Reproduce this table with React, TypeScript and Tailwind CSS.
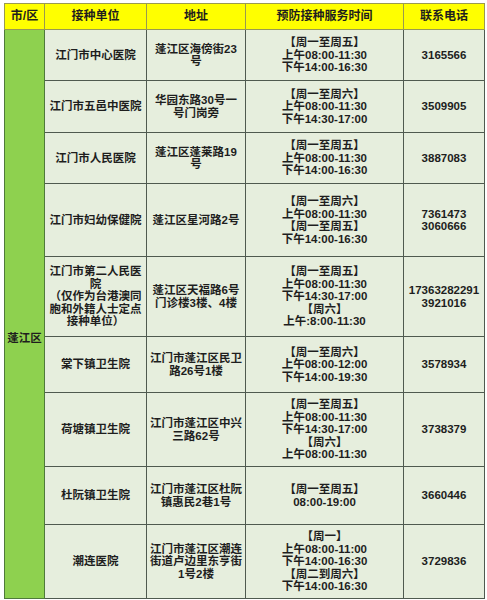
import React from "react";

type Row = {
  unit: string[];
  addr: string[];
  time: string[];
  phone: string[];
  h: string;
};

const rows: Row[] = [
  {
    unit: ["江门市中心医院"],
    addr: ["蓬江区海傍街23", "号"],
    time: ["【周一至周五】", "上午08:00-11:30", "下午14:00-16:30"],
    phone: ["3165566"],
    h: "h-[51px]",
  },
  {
    unit: ["江门市五邑中医院"],
    addr: ["华园东路30号一", "号门岗旁"],
    time: ["【周一至周六】", "上午08:00-11:30", "下午14:30-17:00"],
    phone: ["3509905"],
    h: "h-[52px]",
  },
  {
    unit: ["江门市人民医院"],
    addr: ["蓬江区蓬莱路19", "号"],
    time: ["【周一至周五】", "上午08:00-11:30", "下午14:00-16:30"],
    phone: ["3887083"],
    h: "h-[51px]",
  },
  {
    unit: ["江门市妇幼保健院"],
    addr: ["蓬江区星河路2号"],
    time: ["【周一至周六】", "上午08:00-11:30", "【周一至周五】", "下午14:00-16:30"],
    phone: ["7361473", "3060666"],
    h: "h-[73px]",
  },
  {
    unit: ["江门市第二人民医", "院", "（仅作为台港澳同", "胞和外籍人士定点", "接种单位）"],
    addr: ["蓬江区天福路6号", "门诊楼3楼、4楼"],
    time: ["【周一至周五】", "上午08:00-11:30", "下午14:30-17:00", "【周六】", "上午:8:00-11:30"],
    phone: ["17363282291", "3921016"],
    h: "h-[80px]",
  },
  {
    unit: ["棠下镇卫生院"],
    addr: ["江门市蓬江区民卫", "路26号1楼"],
    time: ["【周一至周六】", "上午08:00-12:00", "下午14:00-19:30"],
    phone: ["3578934"],
    h: "h-[56px]",
  },
  {
    unit: ["荷塘镇卫生院"],
    addr: ["江门市蓬江区中兴", "三路62号"],
    time: ["【周一至周五】", "上午08:00-11:30", "下午14:30-17:00", "【周六】", "上午08:00-11:30"],
    phone: ["3738379"],
    h: "h-[74px]",
  },
  {
    unit: ["杜阮镇卫生院"],
    addr: ["江门市蓬江区杜阮", "镇惠民2巷1号"],
    time: ["【周一至周五】", "08:00-19:00"],
    phone: ["3660446"],
    h: "h-[58px]",
  },
  {
    unit: ["潮连医院"],
    addr: ["江门市蓬江区潮连", "街道卢边里东亨街", "1号2楼"],
    time: ["【周一】", "上午08:00-11:00", "下午14:00-16:30", "【周二到周六】", "下午14:00-16:30"],
    phone: ["3729836"],
    h: "h-[74px]",
  },
];

const Lines = ({ items }: { items: string[] }) => (
  <>
    {items.map((t, i) => (
      <div key={i}>{t}</div>
    ))}
  </>
);

const cell = "border border-[#4f5a4f] text-center align-middle px-0";

export default function App() {
  return (
    <div
      className="w-[487px] h-[600px] bg-white overflow-hidden pt-[3px] pl-[4px] text-[#1e1e1e]"
      style={{ fontFamily: '"Liberation Sans", "Noto Sans CJK SC", sans-serif' }}
    >
      <table className="table-fixed border-collapse w-[480px] text-[11.5px] leading-[12.5px] font-semibold">
        <colgroup>
          <col className="w-[40px]" />
          <col className="w-[102px]" />
          <col className="w-[99px]" />
          <col className="w-[158px]" />
          <col className="w-[81px]" />
        </colgroup>
        <thead>
          <tr className="h-[26px] bg-[#ffff00] font-bold text-[12px]">
            <th className={`${cell} border-[#9a9a50]`}>市/区</th>
            <th className={`${cell} border-[#9a9a50]`}>接种单位</th>
            <th className={`${cell} border-[#9a9a50]`}>地址</th>
            <th className={`${cell} border-[#9a9a50]`}>预防接种服务时间</th>
            <th className={`${cell} border-[#9a9a50]`}>联系电话</th>
          </tr>
        </thead>
        <tbody className="bg-[#e6eedd]">
          {rows.map((r, i) => (
            <tr key={i} className={r.h}>
              {i === 0 && (
                <td
                  rowSpan={rows.length}
                  className="border border-[#4f7a3a] bg-[#8ed14f] text-center align-top pt-[302px]"
                >
                  蓬江区
                </td>
              )}
              <td className={cell}>
                <Lines items={r.unit} />
              </td>
              <td className={cell}>
                <Lines items={r.addr} />
              </td>
              <td className={cell}>
                <Lines items={r.time} />
              </td>
              <td className={cell}>
                <Lines items={r.phone} />
              </td>
            </tr>
          ))}
        </tbody>
      </table>
    </div>
  );
}
